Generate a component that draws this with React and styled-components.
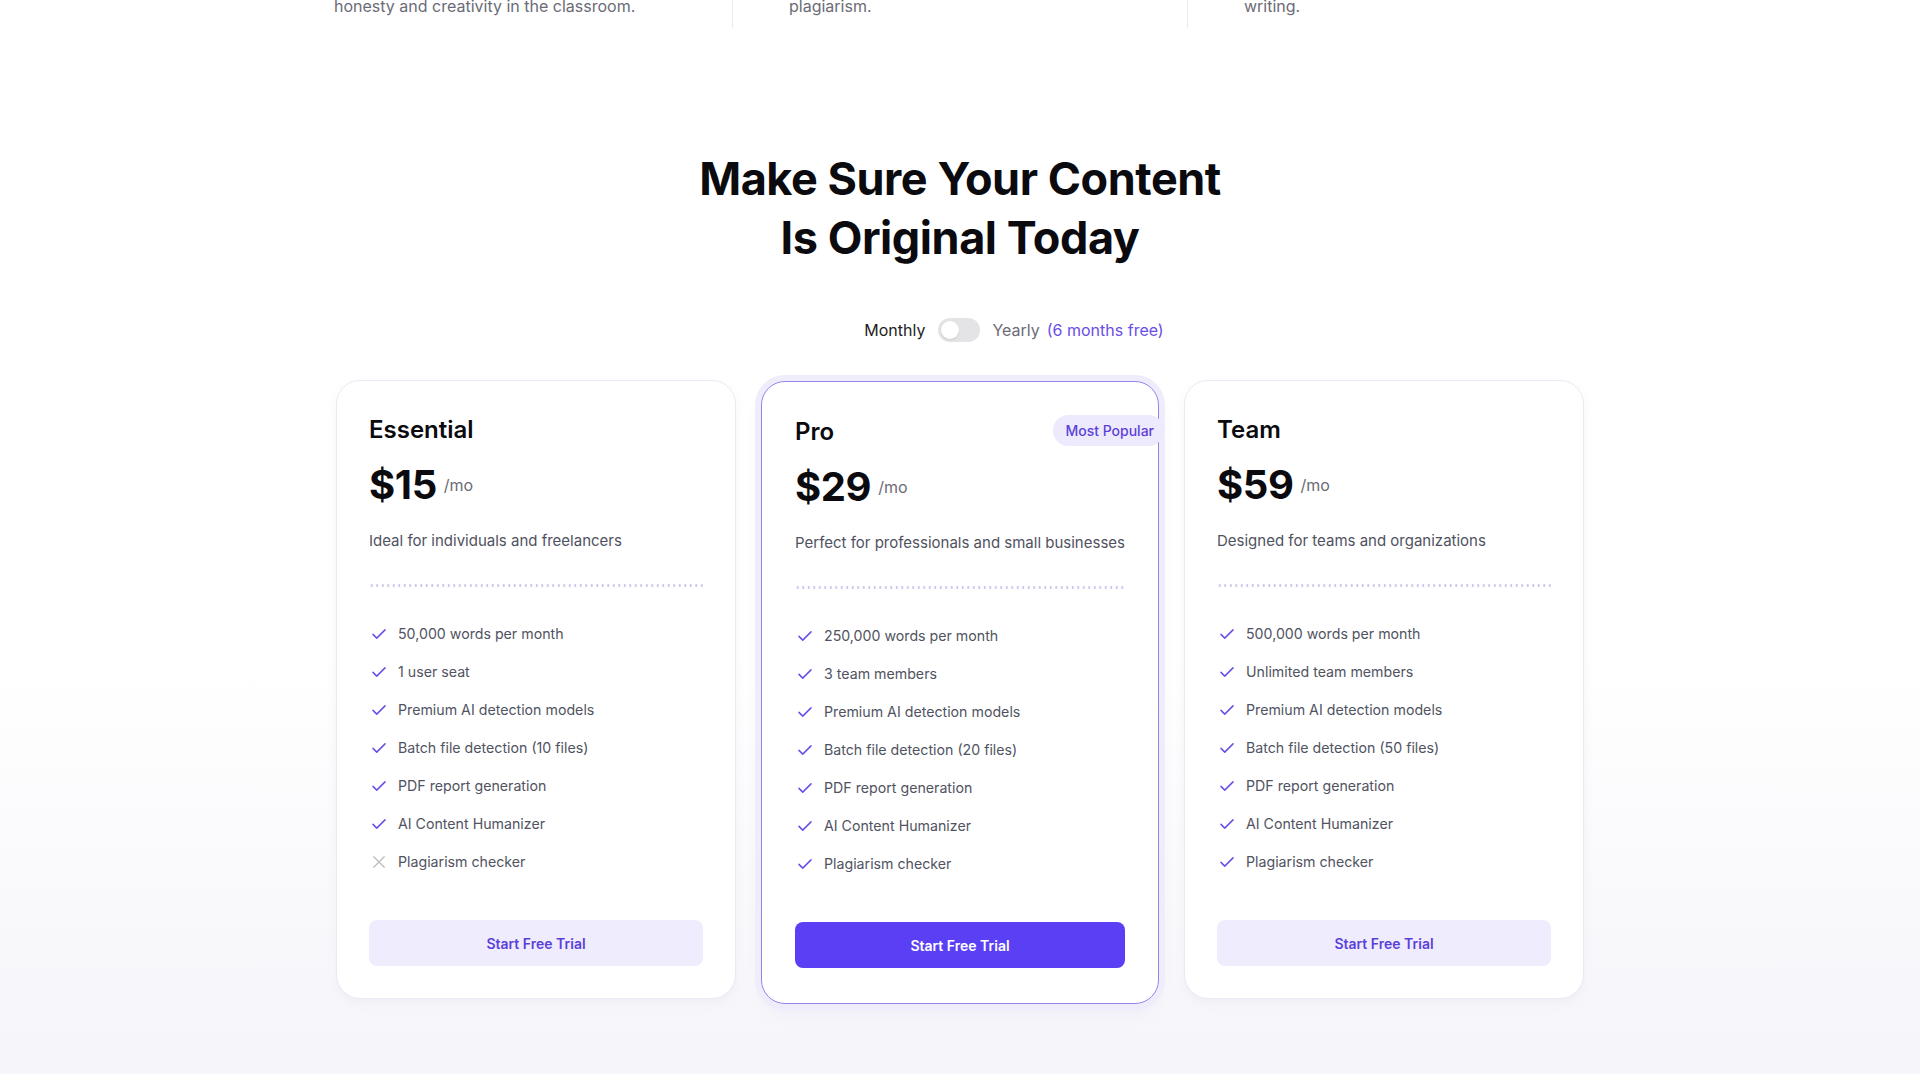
import React from 'react';
import styled, { createGlobalStyle } from 'styled-components';

const GlobalStyle = createGlobalStyle`
    html, body {
        margin: 0;
        padding: 0;
        background: #ffffff;
    }
    body {
        font-family: Inter, "Noto Sans", "Liberation Sans", sans-serif;
        color: #111;
        -webkit-font-smoothing: antialiased;
    }
    #root {
        overflow: hidden;
    }
`;

const Page = styled.div`
    min-height: 1080px;
    background: linear-gradient(180deg, #ffffff 0%, #ffffff 62%, #f5f5fa 100%);
`;

const Container = styled.div`
    width: 1248px;
    margin: 0 auto;
`;

const Columns = styled.div`
    display: grid;
    grid-template-columns: 397px 455px 1fr;
    margin-top: -6px;
`;

const Column = styled.div`
    padding: 0 0 10px ${(p) => (p.$first ? '0' : '56px')};
    margin-left: ${(p) => (p.$first ? '-2px' : '0')};
    border-right: ${(p) => (p.$last ? 'none' : '1px solid #ebebef')};
    font-size: 16px;
    line-height: 24px;
    color: #6b6b76;
`;

const Heading = styled.h2`
    margin: 121px 0 0;
    text-align: center;
    font-size: 45px;
    line-height: 59px;
    font-weight: 700;
    letter-spacing: -0.01em;
    color: #0b0b0f;
`;

const ToggleRow = styled.div`
    margin-top: 51px;
    padding-left: 108px;
    display: flex;
    justify-content: center;
    align-items: center;
    height: 24px;
    font-size: 16px;
`;

const Label = styled.span`
    color: ${(p) => (p.$active ? '#1d1d24' : '#6b6b76')};
`;

const Free = styled.span`
    color: #6a4ee6;
    margin-left: 7px;
`;

const Switch = styled.div`
    width: 42px;
    height: 24px;
    border-radius: 12px;
    background: #e4e4e7;
    margin: 0 12px 0 13px;
    padding: 3px;
    box-sizing: border-box;
    display: flex;
    align-items: center;
`;

const Knob = styled.div`
    width: 18px;
    height: 18px;
    border-radius: 50%;
    background: #fff;
    box-shadow: 0 1px 2px rgba(0, 0, 0, 0.12);
`;

const Cards = styled.div`
    margin-top: 38px;
    display: grid;
    grid-template-columns: repeat(3, 1fr);
    gap: 24px;
    align-items: start;
`;

const Card = styled.div`
    position: relative;
    display: flex;
    flex-direction: column;
    background: #fff;
    border-radius: 24px;
    border: 1px solid ${(p) => (p.$featured ? '#9585ec' : '#ebe9f3')};
    padding: ${(p) => (p.$featured ? '34px 33px 35px' : '33px 32px 32px')};
    margin: ${(p) => (p.$featured ? '1px 1px 0' : '0')};
    box-shadow: ${(p) =>
        p.$featured
            ? '0 0 0 6px #efedfb, 0 8px 18px rgba(80, 70, 160, 0.06)'
            : '0 4px 12px rgba(80, 70, 160, 0.05)'};
`;

const Badge = styled.span`
    position: absolute;
    top: 33px;
    right: -6px;
    height: 31px;
    display: flex;
    align-items: center;
    padding: 0 10px 0 12px;
    border-radius: 16px;
    background: #edeafd;
    color: #5b41d8;
    font-size: 14px;
    font-weight: 500;
`;

const Title = styled.h3`
    margin: 0;
    font-size: 24px;
    line-height: 32px;
    font-weight: 600;
    color: #0b0b0f;
`;

const PriceRow = styled.div`
    margin-top: 15px;
    display: flex;
    align-items: center;
    gap: 7px;
    height: 48px;
`;

const Price = styled.span`
    font-size: 40px;
    line-height: 48px;
    font-weight: 700;
    letter-spacing: -0.01em;
    color: #0b0b0f;
`;

const Period = styled.span`
    font-size: 16px;
    color: #6b6b76;
`;

const Description = styled.p`
    margin: 22px 0 0;
    font-size: 15px;
    line-height: 20px;
    color: #4f5260;
`;

const Divider = styled.div`
    margin-top: 33px;
    height: 3px;
    background-image: radial-gradient(circle, #cfc9ee 1.1px, transparent 1.4px);
    background-size: 5.5px 3px;
    background-repeat: repeat-x;
`;

const Features = styled.ul`
    list-style: none;
    margin: 37px 0 0;
    padding: 0;
    display: flex;
    flex-direction: column;
    gap: 18px;
`;

const Feature = styled.li`
    display: flex;
    align-items: center;
    gap: 10px;
    font-size: 14.2px;
    line-height: 20px;
    color: #505361;
`;

const IconBox = styled.span`
    display: flex;
    width: 18px;
    height: 18px;
    margin-left: 1px;
    color: ${(p) => (p.$off ? '#b9b9bf' : '#6a4ee6')};
`;

const Button = styled.button`
    margin-top: 48px;
    height: 46px;
    border: none;
    border-radius: 8px;
    font-family: inherit;
    font-size: 14px;
    font-weight: 600;
    cursor: pointer;
    background: ${(p) => (p.$primary ? '#5b3ff4' : '#efedfd')};
    color: ${(p) => (p.$primary ? '#ffffff' : '#5b41d8')};
`;

const Check = () => (
    <svg width="18" height="18" viewBox="0 0 24 24" fill="none" stroke="currentColor" strokeWidth="2" strokeLinecap="round" strokeLinejoin="round">
        <path d="M4 12.5l5 5L20 6.5" />
    </svg>
);

const Cross = () => (
    <svg width="18" height="18" viewBox="0 0 24 24" fill="none" stroke="currentColor" strokeWidth="1.6" strokeLinecap="round">
        <path d="M5 5l14 14M19 5L5 19" />
    </svg>
);

const plans = [
    {
        name: 'Essential',
        price: '$15',
        description: 'Ideal for individuals and freelancers',
        features: [
            ['50,000 words per month', true],
            ['1 user seat', true],
            ['Premium AI detection models', true],
            ['Batch file detection (10 files)', true],
            ['PDF report generation', true],
            ['AI Content Humanizer', true],
            ['Plagiarism checker', false],
        ],
    },
    {
        name: 'Pro',
        price: '$29',
        featured: true,
        description: 'Perfect for professionals and small businesses',
        features: [
            ['250,000 words per month', true],
            ['3 team members', true],
            ['Premium AI detection models', true],
            ['Batch file detection (20 files)', true],
            ['PDF report generation', true],
            ['AI Content Humanizer', true],
            ['Plagiarism checker', true],
        ],
    },
    {
        name: 'Team',
        price: '$59',
        description: 'Designed for teams and organizations',
        features: [
            ['500,000 words per month', true],
            ['Unlimited team members', true],
            ['Premium AI detection models', true],
            ['Batch file detection (50 files)', true],
            ['PDF report generation', true],
            ['AI Content Humanizer', true],
            ['Plagiarism checker', true],
        ],
    },
];

const App = () => {
    return (
        <Page>
            <GlobalStyle />
            <Container>
                <Columns>
                    <Column $first>honesty and creativity in the classroom.</Column>
                    <Column>plagiarism.</Column>
                    <Column $last>writing.</Column>
                </Columns>

                <Heading>
                    Make Sure Your Content
                    <br />
                    Is Original Today
                </Heading>

                <ToggleRow>
                    <Label $active>Monthly</Label>
                    <Switch>
                        <Knob />
                    </Switch>
                    <Label>Yearly</Label>
                    <Free>(6 months free)</Free>
                </ToggleRow>

                <Cards>
                    {plans.map((plan) => (
                        <Card key={plan.name} $featured={plan.featured}>
                            {plan.featured && <Badge>Most Popular</Badge>}
                            <Title>{plan.name}</Title>
                            <PriceRow>
                                <Price>{plan.price}</Price>
                                <Period>/mo</Period>
                            </PriceRow>
                            <Description>{plan.description}</Description>
                            <Divider />
                            <Features>
                                {plan.features.map(([text, on]) => (
                                    <Feature key={text}>
                                        <IconBox $off={!on}>{on ? <Check /> : <Cross />}</IconBox>
                                        {text}
                                    </Feature>
                                ))}
                            </Features>
                            <Button $primary={plan.featured}>Start Free Trial</Button>
                        </Card>
                    ))}
                </Cards>
            </Container>
        </Page>
    );
};

export default App;
